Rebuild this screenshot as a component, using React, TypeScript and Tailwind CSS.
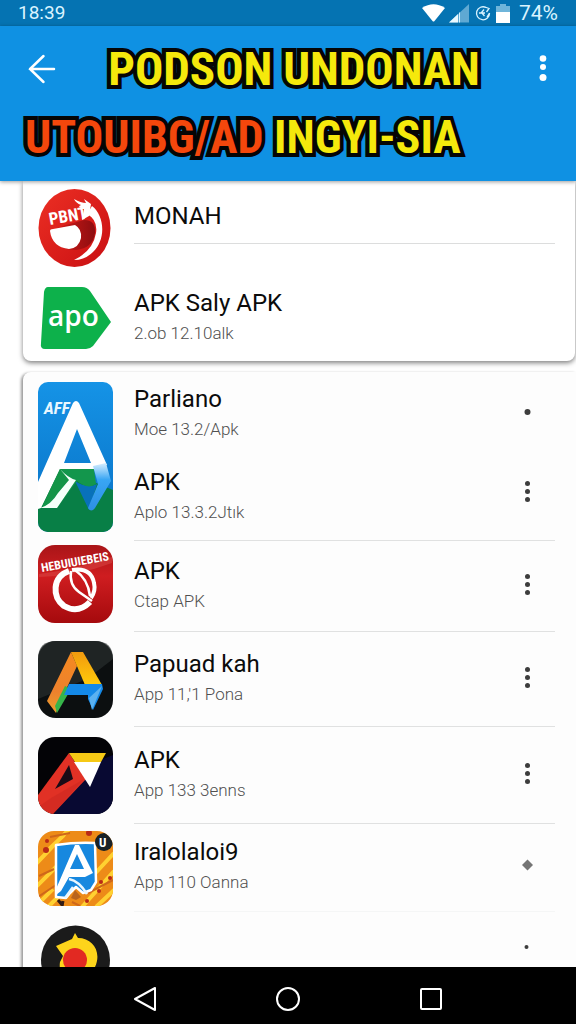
import type { ReactNode } from "react";

const outline = "[-webkit-text-stroke:8px_#050505] [paint-order:stroke_fill] [stroke-linejoin:round]";

function StatusBar() {
  return (
    <div className="flex h-[26px] shrink-0 items-center justify-between bg-[#0573b2] pr-[18px] pl-[18px] text-[#d9f3ff]">
      <span className="text-[19px] leading-6">18:39</span>
      <div className="flex items-center">
        <svg className="h-[18px] w-[23px]" viewBox="0 0 23 18" aria-hidden="true">
          <path d="M0 4 Q11.500 -3.500 23 4 L12.500 17 Q11.500 18 10.500 17Z" fill="#fff" />
        </svg>
        <svg className="ml-1 h-[19px] w-5" viewBox="0 0 20 19" aria-hidden="true">
          <path d="M0 18.500 L20 0V18.500Z" fill="#5fa9d3" />
          <path d="M0 18.500 L9 10V18.500Z" fill="#e9f8ff" />
          <path d="M10.500 18.500V8.500" stroke="#d9f3ff" strokeWidth="1" />
        </svg>
        <svg className="ml-[6px] h-4 w-4" viewBox="0 0 16 16" fill="none" stroke="#d9f3ff" strokeWidth="1.300" aria-hidden="true">
          <path d="M11 2.500A6.500 6.500 0 1 0 14.500 8M4 8h6M9 4.500 6.500 7.500l3 3.500M10 2l4 1.500-2.500 3.500M14.500 8 12 12" />
        </svg>
        <svg className="ml-[5px] h-[19px] w-[14px]" viewBox="0 0 14 19" aria-hidden="true">
          <path d="M4 0h6v2h4v17H0V2h4z" fill="#6fb5da" />
          <path d="M0 8h14v11H0z" fill="#fff" />
        </svg>
        <span className="ml-[9px] text-[21px] leading-6">74%</span>
      </div>
    </div>
  );
}

function Header() {
  return (
    <header className="relative z-10 flex h-[155px] shrink-0 flex-col bg-[#0f91e3] shadow-[0_1px_4px_rgba(0,0,0,0.4)]">
      <div className="flex items-center justify-between pt-[11px] pr-7 pl-6">
        <button type="button" aria-label="Back" className="w-9 pl-1">
          <svg className="h-8 w-7" viewBox="0 0 28 32" fill="none" stroke="#fff" strokeWidth="2.500" strokeLinecap="round" aria-hidden="true">
            <path d="M2 16h24M15.500 3 2 16l13.500 13" />
          </svg>
        </button>
        <h1 className={`font-['Roboto_Condensed','Roboto',sans-serif] text-[47px] leading-[64px] font-bold whitespace-nowrap text-[#f5e90c] ${outline}`}>
          PODSON UNDONAN
        </h1>
        <button type="button" aria-label="More options" className="w-5">
          <svg className="h-8 w-5" viewBox="0 0 20 32" fill="#fff" aria-hidden="true">
            <circle cx="15" cy="5.500" r="3.300" />
            <circle cx="15" cy="14" r="3" />
            <circle cx="15" cy="24.500" r="3.500" />
          </svg>
        </button>
      </div>
      <h2 className={`pl-[25px] font-['Roboto_Condensed','Roboto',sans-serif] text-[46px] leading-[72px] font-bold whitespace-nowrap text-[#f5e90c] ${outline}`}>
        <span className="text-[#f4470c]">UTOUIBG/AD</span> INGYI-SIA
      </h2>
    </header>
  );
}

function Label({ title, sub }: { title: string; sub?: string }) {
  return (
    <div className="min-w-0 flex-1">
      <h3 className="text-2xl leading-8 text-[#0b0b0b]">{title}</h3>
      {sub && <p className="text-[17px] leading-7 font-light text-[#505050]">{sub}</p>}
    </div>
  );
}

function More({ kind = "dots" }: { kind?: "dots" | "dot" | "diamond" | "small" }) {
  return (
    <button type="button" aria-label="More" className="flex w-14 shrink-0 justify-center">
      <svg className="h-7 w-3" viewBox="0 0 12 28" fill="#3d3d3d" aria-hidden="true">
        {kind === "dots" && (
          <>
            <circle cx="6.500" cy="5.500" r="2.500" />
            <circle cx="6.500" cy="13.500" r="2.500" />
            <circle cx="6.500" cy="21.500" r="2.500" />
          </>
        )}
        {kind === "dot" && <circle cx="6.500" cy="13" r="3" />}
        {kind === "diamond" && <path d="M6.500 7.500 12 13 6.500 18.500 1 13z" fill="#757575" />}
        {kind === "small" && <circle cx="5.500" cy="13" r="2" />}
      </svg>
    </button>
  );
}

function Row({ icon, className, children }: { icon: ReactNode; className: string; children: ReactNode }) {
  return (
    <li className={`flex gap-[21px] ${className}`}>
      <div className="flex w-[75px] shrink-0 items-center">{icon}</div>
      <div className="flex min-w-0 flex-1 items-center self-stretch border-b border-inherit pb-[3px]">{children}</div>
    </li>
  );
}

function RedDiscIcon() {
  return (
    <svg className="h-[78px] w-[73px]" viewBox="0 0 73 78" aria-hidden="true">
      <defs>
        <linearGradient id="disc" x1="0" y1="0" x2="1" y2="1">
          <stop offset="0" stopColor="#ec2f24" />
          <stop offset="1" stopColor="#c90f12" />
        </linearGradient>
        <linearGradient id="discShade" x1="0" y1="0" x2="1" y2="0">
          <stop offset="0" stopColor="#dc1c18" />
          <stop offset="1" stopColor="#8d0d10" />
        </linearGradient>
      </defs>
      <ellipse cx="36.500" cy="39" rx="36" ry="39" fill="url(#disc)" />
      <path d="M54 17C67 27 68 51 55 63Q47 71 36 71Q55 62 58 44Q60 31 49 25Z" fill="#fff" />
      <path d="M13 41Q30 35 46 31Q58 31 57 44Q55 59 38 61Q19 61 13 48Z" fill="url(#discShade)" />
      <path d="M12 42Q12 40 15 40L37 36Q44 40 43 49Q41 59 31 60Q14 58 12 42Z" fill="#fff" />
      <path d="M36 10Q43 14 48 14L46 10 53 15 51 27 44 31 46 20Q38 18 43 16Q38 14 36 10Z" fill="#fff" />
      <text x="12" y="36" transform="rotate(-10 12 36)" fontSize="17" fontWeight="700" fill="#fff" fontFamily="Roboto Condensed, Roboto, sans-serif">PBNT</text>
    </svg>
  );
}

function GreenTagIcon() {
  return (
    <svg className="h-[63px] w-[75px]" viewBox="0 0 75 63" aria-hidden="true">
      <path d="M10 0H44Q49 0 52 4L73 35 55 59Q52 62 48 62H7Q2 62 3 56L6 5Q7 0 10 0Z" fill="#0db14b" />
      <text x="10" y="39" fontSize="28" fontWeight="600" fill="#fff" fontFamily="Open Sans, sans-serif">apo</text>
    </svg>
  );
}

function TallIcon() {
  return (
    <svg className="h-[150px] w-[75px]" viewBox="0 0 75 150" aria-hidden="true">
      <defs>
        <linearGradient id="tallBlue" x1="0" y1="0" x2="0" y2="1">
          <stop offset="0" stopColor="#1593e6" />
          <stop offset="1" stopColor="#0870c4" />
        </linearGradient>
        <linearGradient id="tallFold" x1="0" y1="0" x2="0" y2="1">
          <stop offset="0" stopColor="#d8efff" />
          <stop offset=".35" stopColor="#39a6f4" />
          <stop offset="1" stopColor="#2d8fe5" />
        </linearGradient>
        <clipPath id="tallClip"><rect width="75" height="150" rx="10" /></clipPath>
      </defs>
      <g clipPath="url(#tallClip)">
        <path d="M0 0H75V150H0z" fill="url(#tallBlue)" />
        <path d="M0 112 22 86 75 108V150H0z" fill="#087f46" />
        <path d="M37 99Q49 107 59 102L51 128z" fill="#0871ba" />
        <path d="M22 87H56L58 102Q50 108 39 99L19 126H4z" fill="#13964c" />
        <path d="M35 21Q38 17 41 21L69 83 56 87H22L3 126 0 127V100z M39 47 26 81H53z" fill="#fff" fillRule="evenodd" />
        <path d="M55 84 68 81 73 99 57 126Q53 131 50 126L60 102z" fill="url(#tallFold)" />
        <path d="M22 87 33 98 19 112 4 125z" fill="#139447" />
        <path d="M38 98 19 126H2Q13 123 20 111L31 98 22 87Q30 96 38 98z" fill="#f5fffa" />
        <text x="6" y="32" fontSize="17" fontStyle="italic" fontWeight="700" fill="#e8f7ff" fontFamily="Roboto Condensed, Roboto, sans-serif">AFF</text>
      </g>
    </svg>
  );
}

function RedTileIcon() {
  return (
    <svg className="mb-[6px] h-[78px] w-[75px]" viewBox="0 0 75 78" aria-hidden="true">
      <defs>
        <linearGradient id="redTile" x1="0" y1="0" x2="0" y2="1">
          <stop offset="0" stopColor="#a91518" />
          <stop offset=".4" stopColor="#cf1d20" />
          <stop offset="1" stopColor="#a50a0d" />
        </linearGradient>
      </defs>
      <rect width="75" height="78" rx="17" fill="url(#redTile)" />
      <path d="M1 29Q35 25 74 12V18Q40 31 1 32Z" fill="#dc4a48" opacity=".5" />
      <g fill="none" stroke="#fff">
        <path d="M31 26C14 32 14 52 26 61Q40 69 52 57" strokeWidth="6" />
        <path d="M34 25Q53 22 56 38Q58 46 53 53" strokeWidth="4" />
        <path d="M33 26Q31 40 41 47T54 56" strokeWidth="2.500" />
        <path d="M37 25Q50 34 52 51" strokeWidth="2.500" />
      </g>
      <text x="4" y="27" transform="rotate(-10 4 27)" fontSize="12" fontWeight="700" fill="#fff" fontFamily="Roboto Condensed, Roboto, sans-serif">HEBUIUIEBEIS</text>
    </svg>
  );
}

function DriveIcon() {
  return (
    <svg className="h-[77px] w-[75px]" viewBox="0 0 75 77" aria-hidden="true">
      <defs>
        <linearGradient id="leg" x1="0" y1="0" x2="0" y2="1">
          <stop offset="0" stopColor="#f58a20" />
          <stop offset=".65" stopColor="#ed812d" />
          <stop offset="1" stopColor="#e9a02c" />
        </linearGradient>
        <linearGradient id="yellowLeg" x1="0" y1="0" x2="0" y2="1">
          <stop offset="0" stopColor="#f29a0e" />
          <stop offset="1" stopColor="#ffcb0b" />
        </linearGradient>
      </defs>
      <rect width="75" height="77" rx="18" fill="#0c0f10" />
      <path d="M0 18Q0 0 18 0H57Q75 0 75 18L49 38 0 58z" fill="#282e2e" opacity=".7" />
      <path d="M33 11 39 25 25 55 18 72 9 60z" fill="url(#leg)" />
      <path d="M27 45 33 48 19 72 17 65z" fill="#36b54a" />
      <path d="M33 11H45L64 44H47z" fill="url(#yellowLeg)" />
      <path d="M31 43H64L65 48 55 69 50 58V54H26z" fill="#1489e8" />
      <path d="M64 45 51 57 54 69z" fill="#5bb1f0" />
    </svg>
  );
}

function NavyIcon() {
  return (
    <svg className="h-[77px] w-[75px]" viewBox="0 0 75 77" aria-hidden="true">
      <defs><clipPath id="navyClip"><rect width="75" height="77" rx="17" /></clipPath></defs>
      <g clipPath="url(#navyClip)">
        <path d="M0 0H75V77H0z" fill="#030306" />
        <path d="M45 30 75 18V77H16z" fill="#080932" />
        <path d="M31 16 48 42 15 77H0V58z" fill="#e13125" />
        <path d="M31 28 35 42 17 52z" fill="#180b16" />
        <path d="M13 61 46 42 15 77 0 70z" fill="#c8251e" opacity=".45" />
        <path d="M31 16H68L63 25H37z" fill="#f6c915" />
        <path d="M36 25H63L52 50z" fill="#fff" />
      </g>
    </svg>
  );
}

function OrangeIcon() {
  return (
    <svg className="h-[75px] w-[75px]" viewBox="0 0 75 75" aria-hidden="true">
      <defs><clipPath id="orangeClip"><rect width="75" height="75" rx="16" /></clipPath></defs>
      <g clipPath="url(#orangeClip)">
        <path d="M0 0H75V75H0z" fill="#ed8b18" />
        <path d="M-5 36 35-6M-3 57 20 34M8 21 26 4M10 76 32 54M44 76 76 40M52 48 76 22M-2 75 15 58M58 76 77 58" stroke="#ffd131" strokeWidth="4" />
        <path d="M12 6 32 2M1 45 16 38M0 66 18 54M34 71 42 75M50 62 75 49" stroke="#cf671a" strokeWidth="2" />
        <g fill="#b92a18">
          <circle cx="9" cy="10" r="2" /><circle cx="8" cy="19" r="3" /><circle cx="51" cy="2" r="3" />
          <circle cx="63" cy="51" r="2" /><circle cx="72" cy="47" r="2" /><circle cx="61" cy="60" r="2" /><circle cx="49" cy="70" r="2" />
        </g>
        <path d="M18 14Q38 11 57 12L58 51 53 59 45 62 38 56 32 62 28 67 18 66 18 55z" fill="#1788df" stroke="#fff" strokeWidth="2.500" strokeLinejoin="round" />
        <path d="M37 14H41L55 42 47 46H31L23 60 18 64V58z M39 23 32 38H46z" fill="#fff" fillRule="evenodd" />
        <path d="M31 48Q41 50 49 63M35 56 27 67" fill="none" stroke="#e9f7ff" strokeWidth="2.500" />
        <path d="M33 67 37 59 43 66 38 69z" fill="#b9651c" />
        <path d="M20 69 25 75M25 70 24 75" stroke="#321b14" strokeWidth="3" />
        <circle cx="66" cy="11" r="9" fill="#182126" />
        <text x="61" y="16" fontSize="13" fontWeight="700" fill="#fff" fontFamily="Roboto Condensed, Roboto, sans-serif">U</text>
      </g>
    </svg>
  );
}

function DarkDiscIcon() {
  return (
    <svg className="ml-[3px] h-[70px] w-[69px]" viewBox="0 0 69 70" aria-hidden="true">
      <circle cx="34.500" cy="35" r="34.500" fill="#1b1b1b" />
      <path d="M15 21 31 14 34 8 37 13C52 13 61 27 54 42Q46 58 29 54Q17 49 19 37L22 31z" fill="#fdd41b" />
      <circle cx="34" cy="35" r="12" fill="#e22922" />
    </svg>
  );
}

function NavBar() {
  const shape = "h-6 w-6 fill-none stroke-white stroke-2";
  return (
    <nav className="flex h-[57px] shrink-0 justify-center bg-black pt-[7px]">
      <button type="button" aria-label="Back" className="flex w-1/4 items-center justify-center">
        <svg className={shape} viewBox="0 0 24 24"><path d="M23 1V23L3 12z" strokeLinejoin="round" /></svg>
      </button>
      <button type="button" aria-label="Home" className="flex w-1/4 items-center justify-center">
        <svg className={shape} viewBox="0 0 24 24"><circle cx="12" cy="12" r="11" /></svg>
      </button>
      <button type="button" aria-label="Recent apps" className="flex w-1/4 items-center justify-center">
        <svg className={shape} viewBox="0 0 24 24"><rect x="1" y="2" width="20" height="20" rx="1" /></svg>
      </button>
    </nav>
  );
}

export default function App() {
  return (
    <div className="flex h-screen flex-col bg-white font-['Roboto',sans-serif]">
      <StatusBar />
      <Header />
      <main className="min-h-0 flex-1 overflow-hidden pl-[23px]">
        <ul className="relative mr-px h-[180px] rounded-b-lg bg-white pr-5 pl-[15px] shadow-[0_2px_5px_rgba(0,0,0,0.5)]">
          <li className="flex h-[63px] gap-[21px]">
            <div className="w-[75px] shrink-0 pt-2"><RedDiscIcon /></div>
            <div className="flex-1 border-b border-[#dcdddd] pt-[19px]"><Label title="MONAH" /></div>
          </li>
          <li className="flex gap-[21px] pt-[43px]">
            <div className="w-[75px] shrink-0"><GreenTagIcon /></div>
            <Label title="APK Saly APK" sub="2.ob 12.10alk" />
          </li>
        </ul>
        <ul className="mt-[11px] min-h-full rounded-tl-lg bg-[#fdfdfd] pr-[21px] pl-[15px] shadow-[-2px_1px_3px_rgba(0,0,0,0.4)]">
          <Row icon={<TallIcon />} className="h-[169px] border-[#e0e1e1]">
            <div className="flex flex-1 flex-col gap-[23px]">
              <div className="flex items-center"><Label title="Parliano" sub="Moe 13.2/Apk" /><More kind="dot" /></div>
              <div className="flex items-start"><Label title="APK" sub="Aplo 13.3.2Jtık" /><div className="pt-3"><More /></div></div>
            </div>
          </Row>
          <Row icon={<RedTileIcon />} className="h-[91px] border-[#e0e1e1]"><Label title="APK" sub="Ctap APK" /><More /></Row>
          <Row icon={<DriveIcon />} className="h-[95px] border-[#e0e1e1]"><Label title="Papuad kah" sub="App 11,'1 Pona" /><More /></Row>
          <Row icon={<NavyIcon />} className="h-[97px] border-[#e0e1e1]"><Label title="APK" sub="App 133 3enns" /><More /></Row>
          <Row icon={<OrangeIcon />} className="h-[88px] border-[#f5f6f6]"><Label title="Iralolaloi9" sub="App 110 Oanna" /><More kind="diamond" /></Row>
          <Row icon={<DarkDiscIcon />} className="h-[96px] border-[#f5f6f6]"><div className="flex-1" /><div className="pb-5"><More kind="small" /></div></Row>
        </ul>
      </main>
      <NavBar />
    </div>
  );
}
